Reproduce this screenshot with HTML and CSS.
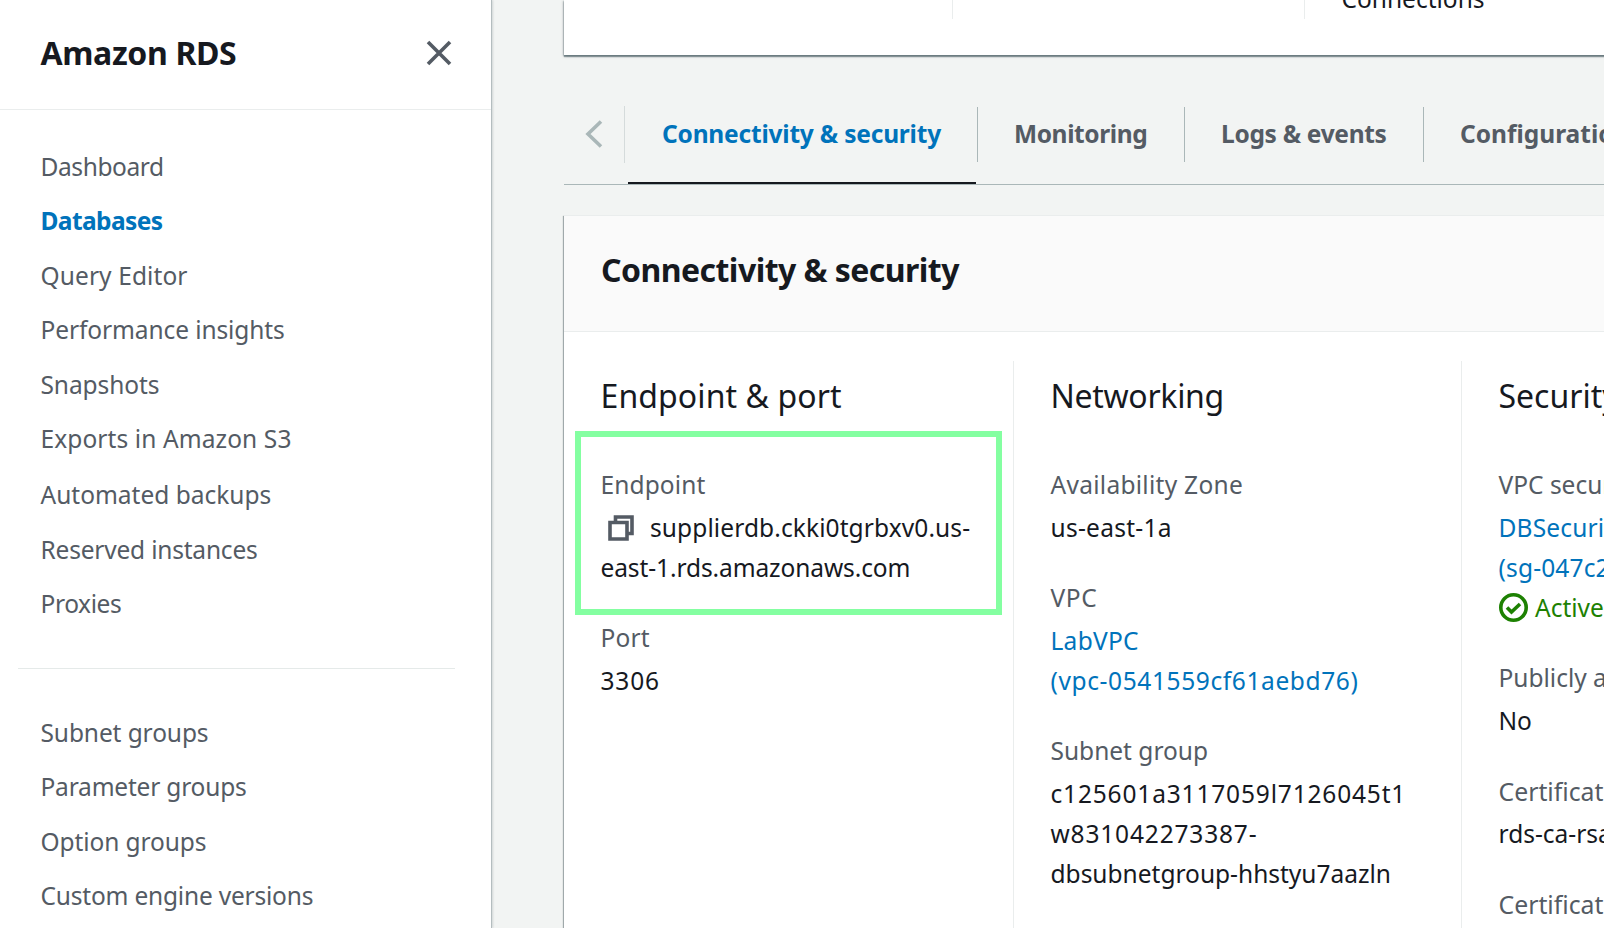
FILE: index.html
```html
<!DOCTYPE html>
<html lang="en">
<head>
<meta charset="utf-8">
<title>Amazon RDS</title>
<link rel="stylesheet" href="styles.css">
</head>
<body>
<div class="app">
  <aside class="sidebar">
    <header class="side-head">
      <h1 class="side-title">Amazon RDS</h1>
      <svg class="close" viewBox="0 0 26 26"><path d="M2 2 24 24M24 2 2 24"/></svg>
    </header>
    <nav class="nav">
      <a class="nav-item tight-4">Dashboard</a>
      <a class="nav-item active">Databases</a>
      <a class="nav-item wide-1">Query Editor</a>
      <a class="nav-item tight-1">Performance insights</a>
      <a class="nav-item tight-1">Snapshots</a>
      <a class="nav-item wide-1">Exports in Amazon S3</a>
      <a class="nav-item spaced">Automated backups</a>
      <a class="nav-item tight-2">Reserved instances</a>
      <a class="nav-item tight-4">Proxies</a>
    </nav>
    <hr class="rule">
    <nav class="nav second">
      <a class="nav-item tight-1">Subnet groups</a>
      <a class="nav-item tight-2">Parameter groups</a>
      <a class="nav-item tight-1">Option groups</a>
      <a class="nav-item tight-2">Custom engine versions</a>
    </nav>
  </aside>
  <main class="main">
    <section class="card summary">
      <div class="sum-col"></div>
      <div class="sum-col"></div>
      <div class="sum-col"><span class="conn">Connections</span></div>
    </section>
    <div class="tabs">
      <div class="scroll-left"><svg class="chevron" viewBox="0 0 18 28"><path d="M16 1.5 3 14 16 26.5"/></svg></div>
      <div class="tab selected"><span class="tight-2">Connectivity &amp; security</span></div>
      <div class="tab"><span class="tight-4">Monitoring</span></div>
      <div class="tab"><span class="tight-3">Logs &amp; events</span></div>
      <div class="tab"><span>Configuration</span></div>
    </div>
    <section class="card details">
      <header class="card-head"><h2 class="card-title">Connectivity &amp; security</h2></header>
      <div class="columns">
        <div class="col">
          <h3 class="col-title wide-1">Endpoint &amp; port</h3>
          <div class="field marked">
            <div class="label wide-1">Endpoint</div>
            <div class="value"><svg class="copy" viewBox="0 0 26 26"><path d="M2 7.500h17V24H2z"/><path d="M7.500 7V2H24v16.500h-4.500"/></svg><span class="wide-1">supplierdb.ckki0tgrbxv0.us-</span><br><span class="tight-1">east-1.rds.amazonaws.com</span></div>
          </div>
          <div class="field">
            <div class="label wide-2">Port</div>
            <div class="value wide-8">3306</div>
          </div>
        </div>
        <div class="col">
          <h3 class="col-title tight-3">Networking</h3>
          <div class="field">
            <div class="label wide-3">Availability Zone</div>
            <div class="value wide-3">us-east-1a</div>
          </div>
          <div class="field">
            <div class="label wide-6">VPC</div>
            <div class="value link"><span class="wide-3">LabVPC</span><br><span class="wide-6">(vpc-0541559cf61aebd76)</span></div>
          </div>
          <div class="field">
            <div class="label">Subnet group</div>
            <div class="value"><span class="wide-8">c125601a3117059l7126045t1</span><br><span class="wide-8">w831042273387-</span><br>dbsubnetgroup-hhstyu7aazln</div>
          </div>
        </div>
        <div class="col">
          <h3 class="col-title">Security</h3>
          <div class="field">
            <div class="label">VPC security groups</div>
            <div class="value link"><span class="wide-2">DBSecurityGroup</span><br><span class="wide-2">(sg-047c2)</span></div>
            <div class="value status"><svg class="check" viewBox="0 0 29 29"><circle cx="14.500" cy="14.500" r="12.700"/><path d="M8 14.500 12.500 19 21 11"/></svg><span>Active</span></div>
          </div>
          <div class="field">
            <div class="label">Publicly accessible</div>
            <div class="value">No</div>
          </div>
          <div class="field">
            <div class="label cert">Certificate authority</div>
            <div class="value">rds-ca-rsa2048-g1</div>
          </div>
          <div class="field">
            <div class="label cert">Certificate authority date</div>
          </div>
        </div>
      </div>
    </section>
  </main>
</div>
</body>
</html>
```
FILE: styles.css
```css
*, *::after { box-sizing: border-box; }
body {
  margin: 0;
  width: 1604px;
  height: 928px;
  overflow: hidden;
  background: #f2f4f3;
  color: #16191f;
  font: 24.5px/40px "Noto Sans", "Open Sans", sans-serif;
  white-space: nowrap;
}
h1, h2, h3 { margin: 0; }
svg { fill: none; flex: none; }
.app { display: flex; height: 928px; overflow: hidden; }

.tight-1 { letter-spacing: -.1px; }
.tight-2 { letter-spacing: -.2px; }
.tight-3 { letter-spacing: -.3px; }
.tight-4 { letter-spacing: -.4px; }
.wide-1 { letter-spacing: .1px; }
.wide-2 { letter-spacing: .16px; }
.wide-3 { letter-spacing: .28px; }
.wide-6 { letter-spacing: .61px; }
.wide-8 { letter-spacing: .83px; }

.sidebar {
  flex: none;
  width: 492px;
  background: #fff;
  border-right: 1px solid #b4bdbf;
  box-shadow: 1px 0 2px rgba(0, 28, 36, .14);
}
.side-head {
  display: flex;
  justify-content: space-between;
  align-items: center;
  height: 110px;
  padding: 0 39px 4px 40.500px;
  border-bottom: 1px solid #eaeded;
}
.side-title { font-size: 32px; font-weight: 700; letter-spacing: -.36px; }
.close { width: 26px; height: 26px; stroke: #545b64; stroke-width: 3.6; }
.nav { display: flex; flex-direction: column; gap: 14.600px; padding: 36.500px 0 0 40.500px; }
.nav-item { color: #545b64; }
.nav-item.active { color: #0073bb; font-weight: 700; letter-spacing: -.6px; }
.nav-item.spaced { margin-top: 1px; }
.rule { height: 1px; margin: 43.300px 36px 0 18px; border: 0; background: #e5eae9; }
.nav.second { padding-top: 44px; }

.main { flex: none; width: 1500px; padding-left: 72px; }
.card {
  background: #fff;
  box-shadow: 0 1px 1px rgba(0, 28, 36, .3), 1px 1px 1px rgba(0, 28, 36, .15), -1px 1px 1px rgba(0, 28, 36, .3);
}
.summary {
  display: grid;
  grid-template-columns: 389px 352px 1fr;
  height: 55px;
  box-shadow: 0 2px 1px rgba(0, 28, 36, .35), 0 1px 3px rgba(0, 28, 36, .35), -1px 1px 1px rgba(0, 28, 36, .12);
}
.sum-col { height: 19px; border-right: 1px solid #eaeded; }
.conn { display: block; margin: -21px 0 0 36.500px; }

.tabs {
  display: flex;
  align-items: flex-start;
  height: 130px;
  padding-top: 52px;
  border-bottom: 1px solid #aab7b8;
  font-weight: 700;
  color: #545b64;
}
.scroll-left {
  flex: none;
  width: 61px;
  height: 57px;
  margin-right: 3px;
  margin-top: -1px;
  padding: 14px 0 0 21px;
  border-right: 1px solid #d5dbdb;
}
.chevron { display: block; width: 18px; height: 28px; stroke: #aab7b8; stroke-width: 3.6; }
.tab { flex: none; height: 55px; padding: 7px 36px 0; border-right: 1px solid #aab7b8; }
.tab.selected {
  width: 350px;
  height: 77px;
  padding-left: 34px;
  border-right: 0;
  background: linear-gradient(#16191f, #16191f) 0 100% / 348px 2px no-repeat;
  color: #0073bb;
}
.tab:nth-child(3) { width: 208px; border-left: 1px solid #aab7b8; margin-left: -1px; }
.tab:nth-child(4) { width: 239px; }

.details { margin-top: 30px; height: 760px; border-top: 1px solid #eaeded; }
.card-head { height: 116px; padding: 34px 37px 0; background: #fafafa; border-bottom: 1px solid #eaeded; }
.card-title { font-size: 32px; font-weight: 700; letter-spacing: -.54px; }
.columns { display: grid; grid-template-columns: 450px 448px 500px; padding-top: 29px; }
.col { height: 620px; padding: 14.600px 0 0 36.500px; border-right: 1px solid #eaeded; }
.col-title { margin-bottom: 49px; font-size: 32px; font-weight: 400; }
.field { position: relative; margin-bottom: 30px; }
.label { margin-bottom: 3px; color: #545b64; }
.label.cert { font-size: 24.800px; }
.link { color: #0073bb; }
.marked::after {
  content: "";
  position: absolute;
  left: -25.500px;
  top: -33.500px;
  width: 427px;
  height: 184px;
  border: 6px solid #84ffa1;
}
.copy { width: 26px; height: 26px; margin: 0 16px 0 7.500px; vertical-align: -4px; stroke: #545b64; stroke-width: 3.6; }
.status { display: flex; align-items: center; gap: 7.500px; color: #1d8102; }
.check { width: 29px; height: 29px; stroke: #1d8102; stroke-width: 3.6; }
```
